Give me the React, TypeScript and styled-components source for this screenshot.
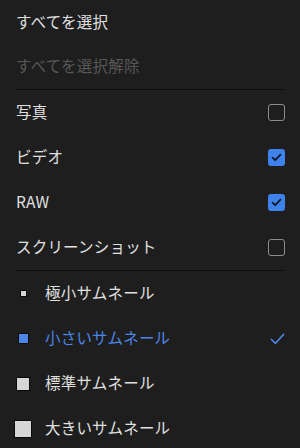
import React from "react";
import styled, { createGlobalStyle } from "styled-components";

const Global = createGlobalStyle`
  html, body { margin: 0; padding: 0; background: #1e1e1e; }
  body { font-family: "Noto Sans CJK JP", "Noto Sans", sans-serif; }
`;

const Menu = styled.div`
  width: 300px;
  height: 448px;
  overflow: hidden;
  background: #1e1e1e;
  display: flex;
  flex-direction: column;
`;

const Row = styled.div<{ $first?: boolean; $thumb?: boolean }>`
  height: ${(p) => (p.$first ? 44 : 45)}px;
  flex: none;
  display: flex;
  align-items: center;
  padding: 0 15px 0 ${(p) => (p.$thumb ? 8 : 16)}px;
  box-sizing: border-box;
`;

const Label = styled.span<{ $tone?: "normal" | "disabled" | "accent"; $indent?: number }>`
  flex: 1;
  font-size: 15.5px;
  line-height: 20px;
  margin: 0 0 3px ${(p) => p.$indent ?? 0}px;
  color: ${(p) =>
    p.$tone === "disabled" ? "#575757" : p.$tone === "accent" ? "#4b86e8" : "#e0e0e0"};
  letter-spacing: 0.2px;
`;

const Divider = styled.div`
  height: 1px;
  flex: none;
  margin: 0 15px 0 16px;
  background: #0f0f0f;
`;

const Box = styled.span<{ $checked?: boolean }>`
  width: 17px;
  height: 17px;
  box-sizing: border-box;
  border-radius: 3px;
  display: flex;
  align-items: center;
  justify-content: center;
  border: ${(p) => (p.$checked ? "none" : "1.6px solid #8c8c8c")};
  background: ${(p) => (p.$checked ? "#3f82ec" : "transparent")};
`;

const ThumbSlot = styled.span`
  width: 30px;
  flex: none;
  display: flex;
  align-items: center;
  justify-content: center;
`;

const Thumb = styled.span<{ $size: number; $active?: boolean }>`
  width: ${(p) => p.$size}px;
  height: ${(p) => p.$size}px;
  box-sizing: border-box;
  background: ${(p) => (p.$active ? "#4b86e8" : "#d6d6d6")};
  border: 1px solid #0a0a0a;
`;

const Tick = () => (
  <svg width="11" height="9" viewBox="0 0 11 9">
    <path d="M1.5 4.6 L4.2 7.2 L9.5 1.6" fill="none" stroke="#101a2a" strokeWidth="1.8" strokeLinecap="round" strokeLinejoin="round" />
  </svg>
);

const Check = () => (
  <svg width="15" height="12" viewBox="0 0 15 12">
    <path d="M1.5 6.5 L5.5 10.3 L13.5 1.5" fill="none" stroke="#4b86e8" strokeWidth="1.7" strokeLinecap="round" strokeLinejoin="round" />
  </svg>
);

const types = [
  { label: "写真", checked: false },
  { label: "ビデオ", checked: true },
  { label: "RAW", checked: true },
  { label: "スクリーンショット", checked: false },
];

const sizes = [
  { label: "極小サムネール", size: 7, active: false },
  { label: "小さいサムネール", size: 11, active: true },
  { label: "標準サムネール", size: 14, active: false },
  { label: "大きいサムネール", size: 18, active: false },
];

export default function App() {
  return (
    <>
      <Global />
      <Menu>
        <Row $first>
          <Label>すべてを選択</Label>
        </Row>
        <Row>
          <Label $tone="disabled">すべてを選択解除</Label>
        </Row>
        <Divider />
        {types.map((t) => (
          <Row key={t.label}>
            <Label>{t.label}</Label>
            <Box $checked={t.checked}>{t.checked && <Tick />}</Box>
          </Row>
        ))}
        <Divider />
        {sizes.map((s) => (
          <Row key={s.label} $thumb>
            <ThumbSlot>
              <Thumb $size={s.size} $active={s.active} />
            </ThumbSlot>
            <Label $tone={s.active ? "accent" : "normal"} $indent={7}>
              {s.label}
            </Label>
            {s.active && <Check />}
          </Row>
        ))}
      </Menu>
    </>
  );
}
